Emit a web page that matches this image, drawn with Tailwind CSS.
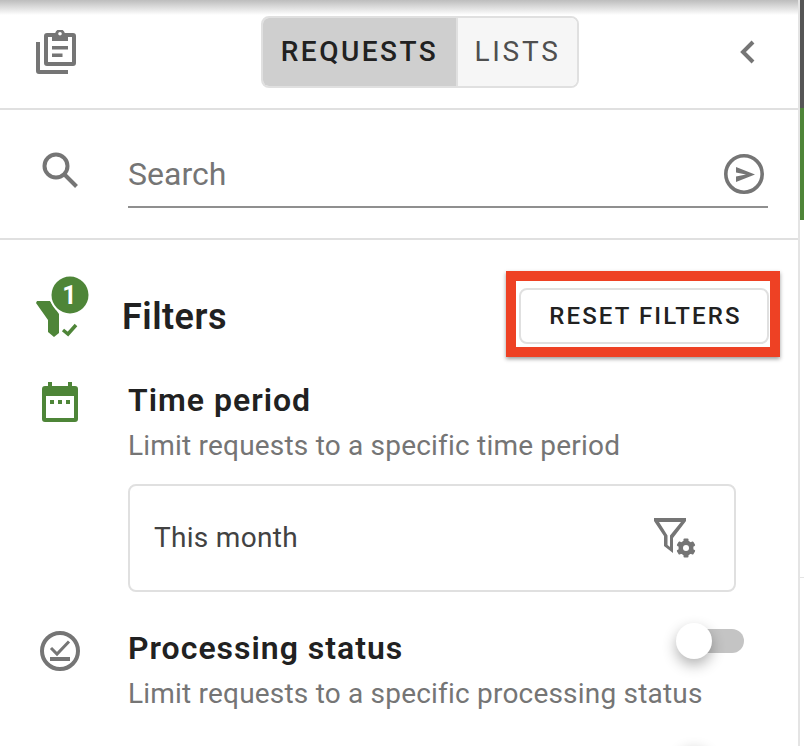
<!DOCTYPE html>
<html lang="en">
<head>
    <meta charset="UTF-8">
    <meta name="viewport" content="width=device-width, initial-scale=1.0">
    <title>Requests</title>
    <script src="https://cdn.jsdelivr.net/npm/@tailwindcss/browser@4"></script>
</head>
<body class="bg-white font-['Roboto',sans-serif]">
<div class="flex h-[746px] w-[804px] overflow-hidden">
    <!-- Panel -->
    <div class="relative w-[800px] shrink-0 border-r-2 border-[#e4e4e4]">
        <div class="absolute left-0 right-0 top-0 h-[15px] bg-gradient-to-b from-[#bdbdbd] to-white"></div>

        <!-- Header -->
        <div class="relative flex h-[110px] items-start border-b-2 border-[#e0e0e0] pl-[36px]">
            <svg class="mt-[30px] shrink-0" width="40" height="44" viewBox="36 30 40 44" fill="#757575">
                <path fill-rule="evenodd" d="M47 33h8.200a5 5 0 0 1 9.600 0H73a3 3 0 0 1 3 3v27a3 3 0 0 1-3 3H47a3 3 0 0 1-3-3V36a3 3 0 0 1 3-3zm1 4v25h24V37h-4v4H52v-4zm12-5a1.800 1.800 0 1 0 0 3.600 1.800 1.800 0 0 0 0-3.600z"/>
                <path d="M52 46h16v3.500H52zM52 53.500h10.500V57H52z"/>
                <path d="M36 42h4v28h28v4H39a3 3 0 0 1-3-3z"/>
            </svg>
            <div class="ml-[185px] mt-[16px] flex h-[72px] w-[318px] overflow-hidden rounded-[8px] border-2 border-[#e0e0e0] text-[28px] leading-none">
                <div class="flex w-[193px] items-center justify-center bg-[#cfcfcf] font-medium tracking-[2.500px] text-[#212121]">REQUESTS</div>
                <div class="flex flex-1 items-center justify-center border-l-2 border-[#e0e0e0] bg-[#f6f6f6] tracking-[2.750px] text-[#4f4f4f]">LISTS</div>
            </div>
            <svg class="ml-[160px] mt-[40px]" width="16" height="24" viewBox="0 0 16 24" fill="none" stroke="#757575" stroke-width="4">
                <path d="M14 2 4 12l10 10"/>
            </svg>
        </div>

        <!-- Search -->
        <div class="flex h-[130px] items-start border-b-2 border-[#e0e0e0] pl-[42px]">
            <svg class="mt-[42px] shrink-0" width="36" height="36" viewBox="0 0 36 36" fill="none" stroke="#757575" stroke-width="4">
                <circle cx="14" cy="14" r="11.500"/>
                <path d="M22 22l12.500 12.500"/>
            </svg>
            <div class="ml-[50px] mt-[35px] flex h-[63px] w-[640px] items-center justify-between border-b-2 border-[#8f8f8f] pb-[4px]">
                <span class="text-[32px] leading-none text-[#757575]">Search</span>
                <svg class="mr-[4px]" width="40" height="40" viewBox="0 0 40 40">
                    <circle cx="20" cy="20" r="18.200" fill="none" stroke="#757575" stroke-width="3.600"/>
                    <path d="M12 13l19 7.500L12 28v-5.500l10-2-10-2z" fill="#757575"/>
                </svg>
            </div>
        </div>

        <!-- Filters heading -->
        <div class="flex h-[117px] items-start pl-[36px]">
            <svg class="mt-[35px] shrink-0" width="54" height="62" viewBox="36 275 54 62">
                <path d="M37 301h13l9 13v19l-5 4-6-5V320L36 303z" fill="#4e8538"/>
                <circle cx="70" cy="295" r="20.500" fill="white"/>
                <circle cx="70" cy="295" r="18.500" fill="#4e8538"/>
                <path d="M63 330l5 4 8-9" fill="none" stroke="#4e8538" stroke-width="3.500"/>
                <text x="69.500" y="304" text-anchor="middle" font-size="25" font-weight="700" fill="white" font-family="Roboto">1</text>
            </svg>
            <h2 class="ml-[32px] mt-[54px] text-[36px] leading-[46px] font-semibold tracking-[0.500px] text-[#212121]">Filters</h2>
            <div class="ml-[279px] mt-[31px] border-[10px] border-[#ee4124] pl-[3px] pr-[1px] pb-[3px] pt-[7px] shadow-[0_2px_4px_rgba(0,0,0,0.4)]">
                <div class="flex h-[56px] w-[250px] items-center justify-center rounded-[8px] border-2 border-[#e0e0e0] bg-white pl-[3px] text-[24px] leading-none font-medium tracking-[2.100px] text-[#212121]">RESET FILTERS</div>
            </div>
        </div>

        <!-- Time period -->
        <div class="mt-[2px] flex pl-[42px]">
            <svg class="mt-[23px] shrink-0" width="36" height="40" viewBox="0 0 36 40" fill="#4e8538">
                <path fill-rule="evenodd" d="M6 0h4v4h16V0h4v4h3a3 3 0 0 1 3 3v30a3 3 0 0 1-3 3H3a3 3 0 0 1-3-3V7a3 3 0 0 1 3-3h3zM4 14v22h28V14z"/>
                <path d="M8 18h4v4H8zM16 18h4v4h-4zM24 18h4v4h-4z"/>
            </svg>
            <div class="ml-[50px]">
                <h3 class="mt-[21px] text-[32px] leading-[40px] font-semibold tracking-[1px] text-[#212121]">Time period</h3>
                <p class="mt-[10px] text-[28px] leading-[32px] tracking-[0.200px] text-[#757575]">Limit requests to a specific time period</p>
                <div class="mt-[22px] flex h-[108px] w-[608px] items-center justify-between rounded-[8px] border-2 border-[#e0e0e0] pl-[24px] pr-[38px]">
                    <span class="text-[28px] leading-none tracking-[0.300px] text-[#424242]">This month</span>
                    <svg width="42" height="40" viewBox="0 0 42 40" fill="#757575">
                        <path fill-rule="evenodd" d="M0 0H32V3L19 20V35L10 28V18L0 3zM5 4H27L16 17.500V29L13.500 27V17.500z"/>
                        <circle cx="32" cy="30" r="10" fill="white"/>
                        <circle cx="32" cy="30" r="7.500"/>
                        <rect x="29.500" y="20.500" width="5" height="19" rx="1"/>
                        <rect x="29.500" y="20.500" width="5" height="19" rx="1" transform="rotate(60 32 30)"/>
                        <rect x="29.500" y="20.500" width="5" height="19" rx="1" transform="rotate(120 32 30)"/>
                        <circle cx="32" cy="30" r="3" fill="white"/>
                    </svg>
                </div>
            </div>
        </div>

        <!-- Processing status -->
        <div class="relative mt-[28px] flex pl-[40px]">
            <svg class="mt-[11px] shrink-0" width="40" height="40" viewBox="0 0 40 40" fill="none" stroke="#757575">
                <circle cx="20" cy="20" r="18" stroke-width="4"/>
                <path d="M11 17l6 6 12-12.500" stroke-width="3"/>
                <path d="M10 28h20" stroke-width="4"/>
            </svg>
            <div class="ml-[48px]">
                <h3 class="mt-[8px] text-[32px] leading-[40px] font-semibold tracking-[1px] text-[#212121]">Processing status</h3>
                <p class="mt-[10px] text-[28px] leading-[32px] tracking-[0.200px] text-[#757575]">Limit requests to a specific processing status</p>
            </div>
            <div class="absolute left-[676px] top-[3px] h-[36px] w-[68px]">
                <div class="absolute right-0 top-[6px] h-[24px] w-[54px] rounded-full bg-[#c4c4c4]"></div>
                <div class="absolute left-0 top-0 h-[36px] w-[36px] rounded-full bg-white shadow-[0_6px_14px_rgba(0,0,0,0.3)]"></div>
            </div>
            <!-- next row's toggle thumb, only its shadow shows at the fold -->
            <div class="absolute left-[676px] top-[129px] h-[36px] w-[36px] rounded-full bg-white shadow-[0_0_14px_rgba(0,0,0,0.2)]"></div>
        </div>
    </div>

    <!-- Scrollbar -->
    <div class="flex w-[4px] shrink-0 flex-col">
        <div class="h-[108px] bg-[#555555]"></div>
        <div class="h-[112px] bg-[#4e8538]"></div>
        <div class="h-[358px] border-b border-[#e4e4e4]"></div>
    </div>
</div>
</body>
</html>
